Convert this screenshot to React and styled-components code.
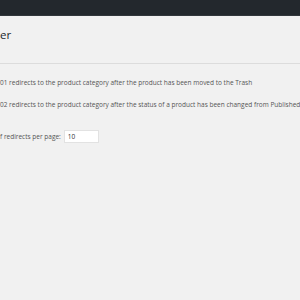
import React from 'react'
import styled, { createGlobalStyle } from 'styled-components'

const Global = createGlobalStyle`
    html, body {
        margin: 0;
        padding: 0;
        background: #f1f1f1;
        overflow: hidden;
    }
    body {
        font-family: "Open Sans", "Liberation Sans", sans-serif;
        color: #444;
    }
`

const AdminBar = styled.div`
    height: 15px;
    background-color: #23282d;
    border-bottom: 1px solid #32373c;
`

const Content = styled.div`
    padding: 0;
`

const Title = styled.h1`
    margin: 0;
    padding: 12px 0 0 0;
    height: 20px;
    font-size: 11.5px;
    font-weight: 400;
    line-height: 14px;
    color: #23282d;
`

const Divider = styled.hr`
    border: 0;
    border-top: 1px solid #dcdcdc;
    margin: 15px 0 0 0;
`

const Options = styled.div`
    display: flex;
    flex-direction: column;
    gap: 13px;
    padding-top: 14px;
    white-space: nowrap;
`

const Option = styled.div`
    font-size: 6.5px;
    line-height: 9px;
    color: #555;
    overflow: hidden;
`

const Field = styled.div`
    display: flex;
    align-items: center;
    gap: 3px;
    margin-top: 21px;
    font-size: 6.5px;
    color: #555;
`

const NumberInput = styled.div`
    width: 30px;
    height: 11px;
    background: #fff;
    border: 1px solid #e2e2e2;
    box-sizing: content-box;
    font-size: 6.5px;
    line-height: 11px;
    padding-left: 3px;
    color: #333;
`

const App = () => {
    return (
        <>
            <Global />
            <AdminBar />
            <Content>
                <Title>er</Title>
                <Divider />
                <Options>
                    <Option>01 redirects to the product category after the product has been moved to the Trash</Option>
                    <Option>02 redirects to the product category after the status of a product has been changed from Published to Draft</Option>
                </Options>
                <Field>
                    <span>f redirects per page:</span>
                    <NumberInput>10</NumberInput>
                </Field>
            </Content>
        </>
    )
}

export default App
